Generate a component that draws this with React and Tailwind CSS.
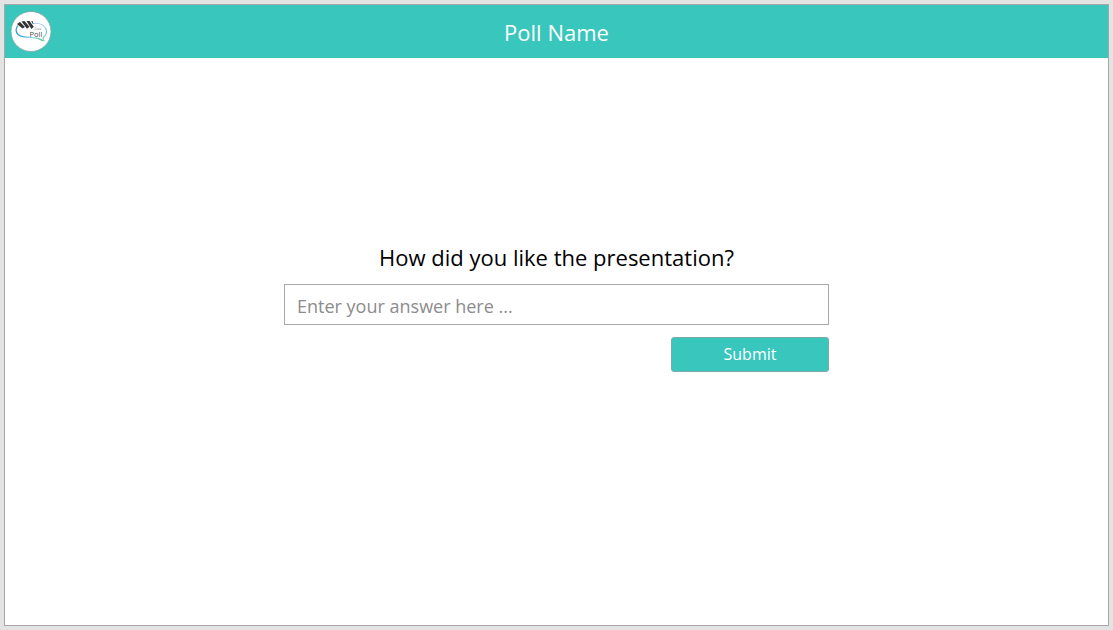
function Logo() {
  return (
    <svg viewBox="0 0 41 41" className="size-[41px]" role="img" aria-label="Live Poll">
      <defs>
        <linearGradient id="bubble" gradientUnits="userSpaceOnUse" x1="5" y1="0" x2="34" y2="0">
          <stop offset="0" stopColor="#3a9bd6" />
          <stop offset="0.25" stopColor="#4aace6" />
          <stop offset="0.6" stopColor="#a5e0f0" />
          <stop offset="1" stopColor="#4fb58c" />
        </linearGradient>
        <linearGradient id="arc" gradientUnits="userSpaceOnUse" x1="0" y1="12" x2="0" y2="30">
          <stop offset="0" stopColor="#a9d0f2" />
          <stop offset="0.5" stopColor="#6ac9d4" />
          <stop offset="1" stopColor="#8ad89a" />
        </linearGradient>
      </defs>
      <circle cx="20" cy="20.5" r="20" fill="#fff" stroke="#86a3a0" strokeWidth="0.800" />
      <path
        d="M7 14.500C4.500 17 4.500 21 7 23.500C10 26.300 16 26.300 21 26.500C26 26.800 29.500 28 32.500 30"
        fill="none" stroke="url(#bubble)" strokeWidth="1.300" />
      <path
        d="M21 12.500C28 11.500 33 14 35 18C36.300 21.500 35 24 33 25.500C31.500 27 32 28.500 33.500 30"
        fill="none" stroke="url(#arc)" strokeWidth="1.100" />
      <path
        d="M6 13L9 11L14 16L11.500 17.500ZM10.500 10.500L13.500 10L18.500 15.800L16 17.700ZM15.500 9.900L18.500 9.900L22.800 15.800L20.500 18Z"
        fill="#333" />
      <path d="M20 9.900L21.800 10.200L22.500 13.500Z" fill="#333" />
      <text x="23.500" y="18.500" fontSize="4" fill="#777" fontFamily="Open Sans, sans-serif">Live</text>
      <text x="18.500" y="25.500" fontSize="7.500" fill="#4a4a4a" fontFamily="Open Sans, sans-serif">Poll</text>
    </svg>
  );
}

export default function App() {
  return (
    <div className="flex min-h-screen bg-[#e3e3e3] p-1 font-['Open_Sans','Noto_Sans',sans-serif]">
      <div className="flex flex-1 flex-col border border-[#a6a6a6] bg-white">
        <header className="grid h-[53px] grid-cols-[1fr_auto_1fr] items-center bg-[#39c6bd] px-1.5">
          <Logo />
          <h1 className="text-[22px] leading-8 text-white">Poll Name</h1>
        </header>
        <main className="flex flex-1 flex-col items-center justify-center px-4 pb-[71px]">
          <form className="flex w-full max-w-[545px] flex-col" onSubmit={(e) => e.preventDefault()}>
            <label htmlFor="answer" className="mb-[11px] text-center text-[22px] leading-8 text-black">
              How did you like the presentation?
            </label>
            <input
              id="answer"
              type="text"
              placeholder="Enter your answer here ..."
              className="h-[41px] w-full border border-[#a9a9a9] bg-white px-3 pt-[3px] text-lg text-black placeholder:text-[#8c8c8c]"
            />
            <button
              type="submit"
              className="mt-3 h-[35px] w-[158px] self-end rounded-[3px] border border-[#7fa9a5] bg-[#39c6bd] pb-px text-base text-white"
            >
              Submit
            </button>
          </form>
        </main>
      </div>
    </div>
  );
}
